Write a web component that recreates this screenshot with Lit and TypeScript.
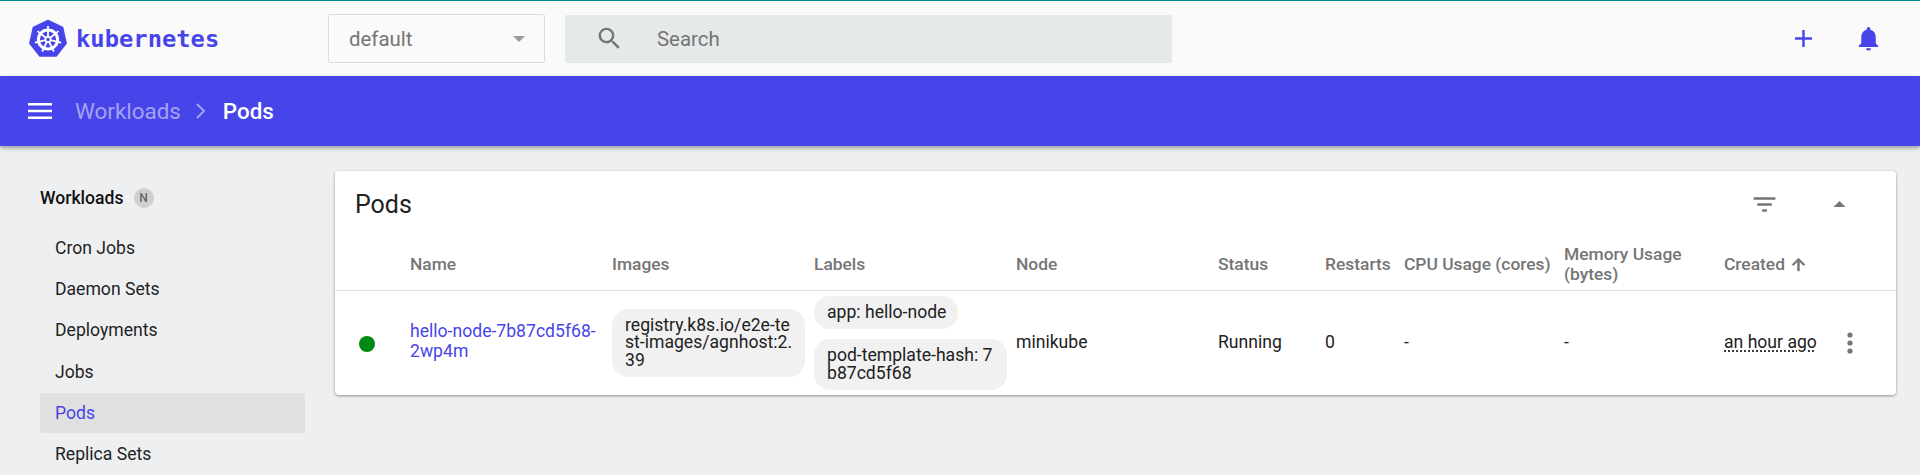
import { LitElement, html, css, svg } from "lit";
import { customElement } from "lit/decorators.js";

const spokes = [0, 51.43, 102.86, 154.29, 205.71, 257.14, 308.57];

@customElement("app-root")
export class AppRoot extends LitElement {
  static styles = css`
    :host { display: block; width: 1920px; height: 475px; overflow: hidden; background: #eeeff1; font-family: Roboto, "Liberation Sans", sans-serif; color: #1f1f1f; }
    .top { height: 76px; box-sizing: border-box; border-top: 1px solid #00878f; background: #fafafa; display: flex; align-items: center; position: relative; }
    .brand { display: flex; align-items: center; gap: 8px; width: 328px; box-sizing: border-box; padding-left: 28px; flex: none; }
    .brand .wordmark { font-family: "DejaVu Sans Mono", monospace; font-weight: 700; font-size: 23.8px; color: #4745e9; }
    .select { width: 217px; height: 49px; box-sizing: border-box; border: 1px solid #dcdcdc; border-radius: 2px; display: flex; align-items: center; justify-content: space-between; padding: 0 19px 0 20px; color: #757575; font-size: 20.4px; flex: none; margin-right: 20px; }
    .caret { width: 0; height: 0; border-left: 6px solid transparent; border-right: 6px solid transparent; border-top: 6px solid #9a9a9a; }
    .search { width: 607px; height: 48px; background: #e6e9e9; border-radius: 2px; display: flex; align-items: center; gap: 33px; padding-left: 30px; box-sizing: border-box; color: #757575; font-size: 20.4px; flex: none; }
    .actions { margin-left: auto; display: flex; align-items: center; gap: 36px; padding-right: 37px; }
    .bar { height: 70px; background: #4745e9; display: flex; align-items: center; padding-left: 28px; box-shadow: 0 2px 4px rgba(0,0,0,.35); position: relative; font-size: 22.4px; font-weight: 500; color: #fff; }
    .crumb-dim { color: #a3a2f4; font-weight: 400; margin-left: 23px; }
    .chev { margin: 0 12px 0 10px; }
    .main { display: flex; }
    .side { width: 265px; margin-left: 40px; margin-right: 29px; flex: none; padding-top: 38px; font-size: 17.6px; }
    .side-h { height: 28px; display: flex; align-items: center; gap: 10px; font-weight: 500; color: #111; margin-bottom: 16px; }
    .badge { width: 20px; height: 20px; border-radius: 50%; background: #d0d0d0; color: #666; font-size: 12px; display: flex; align-items: center; justify-content: center; }
    .item { height: 40px; line-height: 40px; padding-left: 15px; margin-bottom: 1.2px; color: #1f1f1f; border-radius: 2px; }
    .item.active { background: #e0e0e0; color: #4745e9; }
    .card { width: 1561px; margin-left: 1px; margin-top: 25px; height: 224px; background: #fff; border-radius: 4px; box-shadow: 0 1px 3px rgba(0,0,0,.4); align-self: flex-start; }
    .card-h { height: 67px; display: flex; align-items: center; padding-left: 20px; font-size: 25px; color: #212121; position: relative; }
    .card-actions { margin-left: auto; display: flex; align-items: center; gap: 46px; padding-right: 42px; }
    .grid { display: grid; grid-template-columns: 75px 202px 202px 202px 202px 107px 79px 160px 160px 1fr; }
    .th { height: 52px; display: flex; align-items: center; color: #757575; font-size: 17.4px; font-weight: 500; line-height: 20px; border-bottom: 1px solid #e0e0e0; white-space: nowrap; }
    .td { height: 104px; display: flex; align-items: center; font-size: 17.6px; line-height: 20px; color: #212121; padding-bottom: 2px; box-sizing: border-box; }
    .name { color: #4745e9; padding-right: 10px; padding-bottom: 0; margin-top: -2px; }
    .dot { width: 16px; height: 16px; border-radius: 50%; background: #008a14; margin-left: 24px; margin-top: 4px; }
    .chips { flex-direction: column; align-items: flex-start; justify-content: center; gap: 10px; padding-right: 9px; padding-bottom: 0; box-sizing: border-box; }
    .chip { background: #f1f1f1; border-radius: 16px; padding: 8px 12px 8px 13px; line-height: 17.3px; word-break: break-all; box-sizing: border-box; max-width: 193px; }
    .ago { text-decoration: underline dotted; text-underline-offset: 3px; white-space: nowrap; }
    .arrow { margin-left: 4px; }
    .kebab { margin-left: 30px; flex: none; margin-top: 2px; }
  `;

  private logo() {
    return html`<svg width="40" height="40" viewBox="0 0 40 40">
      <path fill="#4745e9" d="M20 1.5 34.6 8.5 38.2 24.3 28.1 37H11.9L1.8 24.3 5.4 8.5Z" stroke="#4745e9" stroke-width="1.5" stroke-linejoin="round"/>
      <g fill="none" stroke="#fff">
        <circle cx="20" cy="20.5" r="9.6" stroke-width="3"/>
        ${spokes.map((a) => svg`<g transform="rotate(${a} 20 20.5)"><line x1="20" y1="7" x2="20" y2="18" stroke-width="1.8"/></g>`)}
        <circle cx="20" cy="20.5" r="2.6" stroke-width="1.8"/>
      </g>
    </svg>`;
  }

  render() {
    return html`
      <div class="top">
        <div class="brand">${this.logo()}<span class="wordmark">kubernetes</span></div>
        <div class="select"><span>default</span><span class="caret"></span></div>
        <div class="search">
          <svg width="29" height="29" viewBox="0 0 24 24" fill="#757575"><path d="M15.5 14h-.79l-.28-.27A6.47 6.47 0 0 0 16 9.5 6.5 6.5 0 1 0 9.5 16c1.61 0 3.09-.59 4.23-1.57l.27.28v.79l5 4.99L20.49 19l-4.99-5zm-6 0C7.01 14 5 11.99 5 9.5S7.01 5 9.5 5 14 7.01 14 9.5 11.99 14 9.5 14z"/></svg>
          <span>Search</span>
        </div>
        <div class="actions">
          <svg width="29" height="29" viewBox="0 0 24 24" fill="#4745e9"><path d="M19 13h-6v6h-2v-6H5v-2h6V5h2v6h6v2z"/></svg>
          <svg width="29" height="29" viewBox="0 0 24 24" fill="#4745e9"><path d="M12 22c1.1 0 2-.9 2-2h-4c0 1.1.9 2 2 2zm6-6v-5c0-3.07-1.63-5.64-4.5-6.32V4c0-.83-.67-1.5-1.5-1.5s-1.5.67-1.5 1.5v.68C7.64 5.36 6 7.92 6 11v5l-2 2v1h16v-1l-2-2z"/></svg>
        </div>
      </div>
      <div class="bar">
        <svg width="24" height="16" viewBox="0 0 24 16" fill="#fff"><path d="M0 0h24v2.6H0zM0 6.7h24v2.6H0zM0 13.4h24V16H0z"/></svg>
        <span class="crumb-dim">Workloads</span>
        <svg class="chev" width="20" height="20" viewBox="0 0 20 20" fill="none" stroke="#a3a2f4" stroke-width="2"><path d="M6 3l7 7-7 7"/></svg>
        <span>Pods</span>
      </div>
      <div class="main">
        <div class="side">
          <div class="side-h"><span>Workloads</span><span class="badge">N</span></div>
          ${["Cron Jobs", "Daemon Sets", "Deployments", "Jobs", "Pods", "Replica Sets"].map(
            (n) => html`<div class="item ${n === "Pods" ? "active" : ""}">${n}</div>`
          )}
        </div>
        <div class="card">
          <div class="card-h">
            <span>Pods</span>
            <div class="card-actions">
              <svg width="29" height="29" viewBox="0 0 24 24" fill="#757575"><path d="M10 18h4v-2h-4v2zM3 6v2h18V6H3zm3 7h12v-2H6v2z"/></svg>
              <svg width="29" height="29" viewBox="0 0 24 24" fill="#757575"><path d="M7 14l5-5 5 5z"/></svg>
            </div>
          </div>
          <div class="grid">
            <div class="th"></div>
            <div class="th">Name</div><div class="th">Images</div><div class="th">Labels</div><div class="th">Node</div>
            <div class="th">Status</div><div class="th">Restarts</div><div class="th">CPU Usage (cores)</div><div class="th">Memory Usage<br />(bytes)</div>
            <div class="th">Created
              <svg class="arrow" width="19" height="19" viewBox="0 0 24 24" fill="#757575" stroke="#757575" stroke-width="1"><path d="M4 12l1.41 1.41L11 7.83V20h2V7.83l5.58 5.59L20 12l-8-8-8 8z"/></svg>
            </div>
            <div class="td"><span class="dot"></span></div>
            <div class="td name">hello-node-7b87cd5f68-2wp4m</div>
            <div class="td chips"><span class="chip">registry.k8s.io/e2e-test-images/agnhost:2.39</span></div>
            <div class="td chips"><span class="chip">app: hello-node</span><span class="chip">pod-template-hash: 7b87cd5f68</span></div>
            <div class="td">minikube</div>
            <div class="td">Running</div>
            <div class="td">0</div>
            <div class="td">-</div>
            <div class="td">-</div>
            <div class="td"><span class="ago">an hour ago</span>
              <svg class="kebab" width="6" height="22" viewBox="0 0 6 22" fill="#757575"><circle cx="3" cy="3" r="2.6"/><circle cx="3" cy="11" r="2.6"/><circle cx="3" cy="19" r="2.6"/></svg>
            </div>
          </div>
        </div>
      </div>
    `;
  }
}
